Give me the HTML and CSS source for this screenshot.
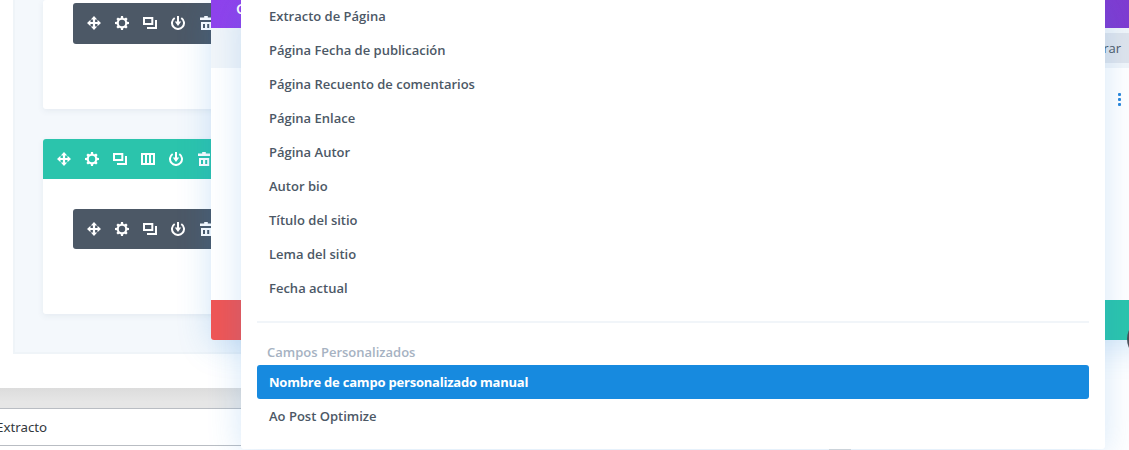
FILE: index.html
```html
<!DOCTYPE html>
<html lang="es">
<head>
<meta charset="utf-8">
<title>Constructor</title>
<link rel="stylesheet" href="styles.css">
</head>
<body>
<svg class="defs" aria-hidden="true">
  <symbol id="move" viewBox="0 0 14 14"><path d="M7 0 10.200 3.500H8.100V5.900h2.400V3.800L14 7l-3.500 3.200V8.100H8.100v2.400h2.100L7 14 3.800 10.500h2.100V8.100H3.500v2.100L0 7l3.500-3.200v2.100h2.400V3.500H3.800z"/></symbol>
  <symbol id="gear" viewBox="0 0 14 14"><circle cx="7" cy="7" r="4.200" fill="none" stroke="currentColor" stroke-width="2"/><path d="M6 0h2l.5 2.800h-3zM6 14h2l.5-2.800h-3zM0 6v2l2.800.5v-3zM14 6v2l-2.800.5v-3zM1.400 2.900l1.500-1.500 2.200 1.400-2.300 2.300zM11.100 1.400l1.500 1.500-1.400 2.200-2.300-2.300zM12.600 11.100l-1.500 1.500-2.200-1.400 2.300-2.300zM2.900 12.600l-1.500-1.500 1.400-2.200 2.300 2.300z"/></symbol>
  <symbol id="copy" viewBox="0 0 14 14"><path fill-rule="evenodd" d="M0 1h10.300v8H0zM2 3v4h6.300V3zM12 4h2v9H4v-2h8z"/></symbol>
  <symbol id="cols" viewBox="0 0 14 14"><path fill-rule="evenodd" d="M0 1h14v12H0zM2 3v8h2V3zM6 3v8h2V3zM10 3v8h2V3z"/></symbol>
  <symbol id="save" viewBox="0 0 14 14"><path d="M3.700 2A6 6 0 1 0 10.300 2" fill="none" stroke="currentColor" stroke-width="2"/><path d="M6 0h2v5.500h2.200L7 10 3.800 5.500H6z"/></symbol>
  <symbol id="trash" viewBox="0 0 14 14"><path fill-rule="evenodd" d="M5.200 0h3.600v1.500H13V4H1V1.500h4.200zM2 6h10.200v8H2zM4 8v4h2V8zM8.200 8v4h2V8z"/></symbol>
</svg>
<main class="page">
  <section class="builder">
    <div class="section section-top">
      <div class="module">
        <svg><use href="#move"/></svg><svg><use href="#gear"/></svg><svg><use href="#copy"/></svg><svg><use href="#save"/></svg><svg><use href="#trash"/></svg>
      </div>
    </div>
    <div class="section">
      <div class="row-bar">
        <svg><use href="#move"/></svg><svg><use href="#gear"/></svg><svg><use href="#copy"/></svg><svg><use href="#cols"/></svg><svg><use href="#save"/></svg><svg><use href="#trash"/></svg>
      </div>
      <div class="module">
        <svg><use href="#move"/></svg><svg><use href="#gear"/></svg><svg><use href="#copy"/></svg><svg><use href="#save"/></svg><svg><use href="#trash"/></svg>
      </div>
    </div>
  </section>
</main>
<div class="gap"></div>
<div class="metabox">Extracto</div>

<div class="modal">
  <header class="modal-head">C</header>
  <div class="modal-tools"><span class="filter">rar</span></div>
  <div class="modal-body"><span class="dots"><i></i><i></i><i></i></span></div>
  <footer class="modal-foot"><span class="cancel"></span><span class="accept"></span></footer>
</div>
<div class="fab"></div>

<div class="menu">
  <ul class="list">
    <li>Extracto de Página</li>
    <li>Página Fecha de publicación</li>
    <li>Página Recuento de comentarios</li>
    <li>Página Enlace</li>
    <li>Página Autor</li>
    <li>Autor bio</li>
    <li>Título del sitio</li>
    <li>Lema del sitio</li>
    <li>Fecha actual</li>
  </ul>
  <h3 class="group">Campos Personalizados</h3>
  <ul class="list">
    <li class="active">Nombre de campo personalizado manual</li>
    <li>Ao Post Optimize</li>
  </ul>
</div>
<div class="handle"></div>
</body>
</html>
```
FILE: styles.css
```css
* { box-sizing: border-box; }
body {
  margin: 0;
  height: 450px;
  position: relative;
  overflow: hidden;
  background: #fff;
  font-family: "Open Sans", sans-serif;
  font-size: 13px;
}
.defs { position: absolute; width: 0; height: 0; }

.page, .gap, .metabox { width: 1000px; }
.page { height: 388px; padding-left: 13px; background: #fff; }
.builder {
  height: 354px;
  padding-left: 28px;
  border: solid #eff4f8;
  border-width: 0 0 2px 2px;
  background: #f4f8fc;
}
.section {
  height: 175px;
  border-radius: 3px;
  background: #fff;
  box-shadow: 0 2px 6px rgba(60, 90, 120, .08);
}
.section-top { height: 109px; padding-top: 3px; margin-bottom: 30px; }
.row-bar, .module {
  display: flex;
  align-items: center;
  gap: 14px;
  height: 40px;
  color: #fff;
}
.row-bar { padding-left: 14px; border-radius: 3px 3px 0 0; background: #2bc4ac; }
.module { margin-left: 30px; padding-left: 14px; border-radius: 3px; background: #4c5866; }
.section-top .module { height: 41px; padding-bottom: 1px; }
.row-bar + .module { margin-top: 30px; }
.row-bar svg, .module svg { width: 14px; height: 14px; flex: none; fill: currentColor; }

.gap { height: 20px; background: linear-gradient(#dcdcdc, #e6e6e6 70%); }
.metabox {
  height: 38px;
  border: solid #b9bdc3;
  border-width: 1px 0;
  text-indent: -4px;
  color: #32373c;
  font: 13.300px/37px "Noto Sans", sans-serif;
  background: #fff;
}

.modal {
  position: absolute;
  left: 211px;
  top: 0;
  width: 950px;
  height: 340px;
  display: flex;
  flex-direction: column;
  border-radius: 0 0 3px 3px;
  background: #fff;
  box-shadow: 0 5px 34px rgba(43, 135, 218, .22);
}
.modal-head {
  height: 28px;
  padding-left: 25px;
  background: linear-gradient(90deg, #8f42ec, #7e3bd0);
  color: #fff;
  font-size: 15px;
  font-weight: 600;
  line-height: 16px;
}
.modal-tools { height: 40px; padding: 5px 32px; text-align: right; background: #f1f5f9; }
.filter {
  display: inline-block;
  width: 86px;
  height: 30px;
  padding-right: 8px;
  background: #dfe4ec;
  color: #4c5866;
  line-height: 30px;
}
.modal-body { flex: 1; display: flex; justify-content: flex-end; padding: 25px 40px 0 0; }
.dots { display: grid; gap: 2px; align-content: start; }
.dots i { width: 3px; height: 3px; border-radius: 1px; background: #2b87da; }
.modal-foot { display: flex; height: 40px; }
.cancel { width: 300px; border-radius: 0 0 0 3px; background: #ef5555; }
.accept { flex: 1; background: #2bc4ac; }
.fab { position: absolute; left: 1127px; top: 319px; width: 40px; height: 40px; border-radius: 50%; background: #4c5058; }

.menu {
  position: absolute;
  left: 241px;
  top: 0;
  width: 864px;
  height: 449px;
  padding: 0 16px;
  border-radius: 0 0 3px 3px;
  background: #fff;
  box-shadow: 0 5px 34px rgba(43, 135, 218, .2);
}
.list { list-style: none; margin: 0; padding: 0; color: #4c5866; font-weight: 600; }
.list:first-child { height: 321px; margin-top: -1px; }
.list li { height: 34px; padding-left: 12px; line-height: 34px; }
.list .active { border-radius: 3px; background: #178adf; color: #fff; font-weight: 700; letter-spacing: -.21px; }
.group {
  height: 44px;
  margin: 1px 0 0;
  padding: 19px 10px 0;
  border-top: 2px solid #f1f5f9;
  color: #a6b2c2;
  font-size: 13px;
  line-height: 20px;
  font-weight: 600;
}
.handle { position: absolute; left: 829px; top: 449px; width: 22px; height: 1px; background: #cbd3da; }
```
